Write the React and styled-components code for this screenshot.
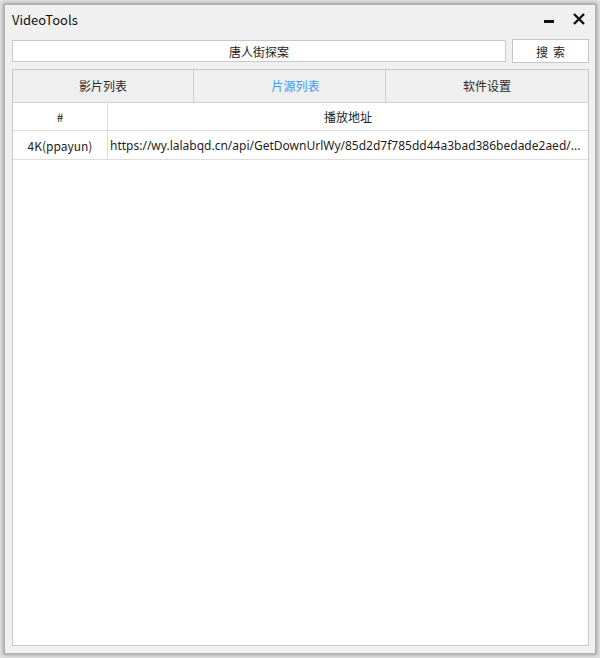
import React from "react";
import styled, { createGlobalStyle } from "styled-components";

const Global = createGlobalStyle`
  html, body { margin: 0; padding: 0; background: #ffffff; }
  body { font-family: "Noto Sans CJK SC", "Noto Sans", sans-serif; }
  * { box-sizing: border-box; }
`;

const Page = styled.div`
  width: 600px;
  height: 658px;
  padding: 4px;
  background: #dedede;
`;

const Window = styled.div`
  width: 100%;
  height: 100%;
  display: flex;
  flex-direction: column;
  background: #f0f0f0;
  border: 1px solid #b0b0b0;
  box-shadow: 0 0 3px 1px rgba(0, 0, 0, 0.28);
  padding: 0 6px 7px 7px;
`;

const TitleBar = styled.div`
  height: 30px;
  display: flex;
  align-items: center;
  justify-content: space-between;
  padding: 0 2px 0 0;
`;

const Title = styled.div`
  font-family: "Noto Sans CJK SC", sans-serif;
  font-size: 13px;
  color: #111;
  margin-top: -2px;
`;

const WinButtons = styled.div`
  display: flex;
  align-items: center;
  gap: 16px;
  margin-right: 1px;
  margin-top: -2px;
`;

const IconButton = styled.div`
  width: 14px;
  height: 14px;
  display: flex;
  align-items: center;
  justify-content: center;
`;

const SearchRow = styled.div`
  display: flex;
  align-items: center;
  gap: 6px;
  margin-top: 4px;
  height: 24px;
`;

const SearchInput = styled.div`
  flex: 1;
  height: 22px;
  background: #fff;
  border: 1px solid #c9c9c9;
  display: flex;
  align-items: center;
  justify-content: center;
  font-size: 12px;
  color: #222;
`;

const SearchButton = styled.div`
  width: 77px;
  height: 24px;
  background: #fff;
  border: 1px solid #c6c6c6;
  display: flex;
  align-items: center;
  justify-content: center;
  font-size: 12px;
  color: #222;
  letter-spacing: 5px;
  padding-left: 5px;
`;

const Panel = styled.div`
  flex: 1;
  margin-top: 6px;
  display: flex;
  flex-direction: column;
  border: 1px solid #c8c8c8;
  background: #fff;
`;

const Tabs = styled.div`
  display: flex;
  height: 33px;
  background: #efefef;
  border-bottom: 1px solid #d0d0d0;
`;

const Tab = styled.div`
  width: ${(p) => p.$w}px;
  flex: ${(p) => (p.$last ? 1 : "none")};
  display: flex;
  align-items: center;
  justify-content: center;
  font-size: 12px;
  color: ${(p) => (p.$active ? "#3d99f5" : "#2a2a2a")};
  padding-left: ${(p) => (p.$active ? 12 : 0)}px;
  padding-bottom: 1px;
  border-right: ${(p) => (p.$last ? "none" : "1px solid #d2d2d2")};
`;

const Row = styled.div`
  display: flex;
  height: ${(p) => p.$h}px;
  border-bottom: 1px solid #dcdcdc;
  background: #fff;
`;

const Cell = styled.div`
  width: ${(p) => (p.$w ? `${p.$w}px` : "auto")};
  flex: ${(p) => (p.$w ? "none" : 1)};
  min-width: 0;
  display: flex;
  align-items: center;
  justify-content: ${(p) => (p.$left ? "flex-start" : "center")};
  padding-left: ${(p) => (p.$left ? 2 : 0)}px;
  border-right: ${(p) => (p.$divider ? "1px solid #dcdcdc" : "none")};
  font-size: 12px;
  color: #1e1e1e;
  white-space: nowrap;
  overflow: hidden;
`;

const UrlText = styled.span`
  font-family: "Noto Sans", sans-serif;
  font-size: 12px;
  letter-spacing: 0;
  white-space: nowrap;
`;

const Empty = styled.div`
  flex: 1;
  background: #fff;
`;

export default function App() {
  return (
    <>
      <Global />
      <Page>
        <Window>
          <TitleBar>
            <Title>VideoTools</Title>
            <WinButtons>
              <IconButton>
                <svg width="12" height="14" viewBox="0 0 12 14">
                  <rect x="1" y="8" width="10" height="3" fill="#111" />
                </svg>
              </IconButton>
              <IconButton>
                <svg width="14" height="14" viewBox="0 0 14 14">
                  <path d="M2 2 L12 12 M12 2 L2 12" stroke="#111" strokeWidth="2.4" />
                </svg>
              </IconButton>
            </WinButtons>
          </TitleBar>
          <SearchRow>
            <SearchInput>唐人街探案</SearchInput>
            <SearchButton>搜索</SearchButton>
          </SearchRow>
          <Panel>
            <Tabs>
              <Tab $w={181}>影片列表</Tab>
              <Tab $w={192} $active>片源列表</Tab>
              <Tab $last>软件设置</Tab>
            </Tabs>
            <Row $h={28}>
              <Cell $w={95} $divider>#</Cell>
              <Cell>播放地址</Cell>
            </Row>
            <Row $h={29}>
              <Cell $w={95} $divider>4K(ppayun)</Cell>
              <Cell $left>
                <UrlText>https://wy.lalabqd.cn/api/GetDownUrlWy/85d2d7f785dd44a3bad386bedade2aed/...</UrlText>
              </Cell>
            </Row>
            <Empty />
          </Panel>
        </Window>
      </Page>
    </>
  );
}
